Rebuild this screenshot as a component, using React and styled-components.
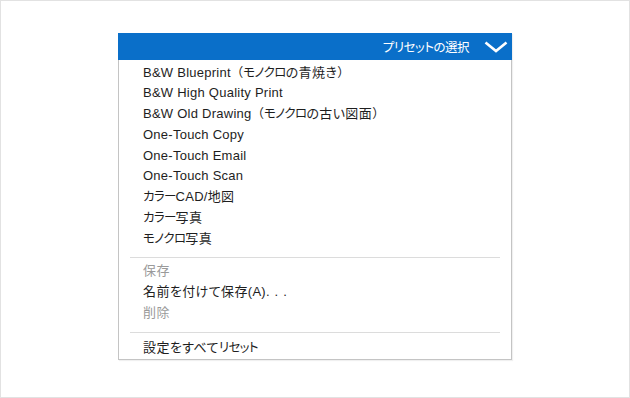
import React from "react";
import styled, { createGlobalStyle } from "styled-components";

const Global = createGlobalStyle`
  html, body { margin: 0; padding: 0; background: #ffffff; }
  body {
    font-family: "Liberation Sans", Arial, "Noto Sans CJK JP", sans-serif;
  }
  * { box-sizing: border-box; }
`;

const Frame = styled.div`
  width: 630px;
  height: 398px;
  border: 1px solid #e2e2e2;
  display: flex;
  justify-content: center;
  align-items: flex-start;
  padding-top: 32px;
  background: #fff;
`;

const Panel = styled.div`
  width: 394px;
  border: 1px solid #c4c4c4;
  border-top: none;
  background: #fff;
  box-shadow: 1px 1px 1px rgba(0, 0, 0, 0.06);
  display: flex;
  flex-direction: column;
`;

const Header = styled.div`
  height: 27px;
  margin: 0 -1px;
  background: #0a6fc9;
  color: #fff;
  display: flex;
  align-items: center;
  justify-content: flex-end;
  gap: 14px;
  padding-right: 4px;
`;

const HeaderLabel = styled.span`
  font-family: "Noto Sans CJK JP", sans-serif;
  font-size: 12.5px;
  font-feature-settings: "palt";
  letter-spacing: -0.5px;
  margin-right: 1px;
`;

const List = styled.div`
  display: flex;
  flex-direction: column;
  padding: 1.5px 0 1.5px;
`;

const Item = styled.div`
  height: 20.75px;
  line-height: 20.75px;
  padding-left: 24px;
  color: ${(p) => (p.$disabled ? "#9a9a9a" : "#1e1e1e")};
  white-space: nowrap;
`;

const Latin = styled.span`
  font-family: "Liberation Sans", Arial, sans-serif;
  font-size: 13px;
  letter-spacing: 0.25px;
`;

const Kana = styled.span`
  font-family: "Noto Sans CJK JP", sans-serif;
  font-size: 12.5px;
  font-feature-settings: "palt";
  letter-spacing: -0.7px;
`;

const Kanji = styled.span`
  font-family: "Noto Sans CJK JP", sans-serif;
  font-size: 13px;
  font-feature-settings: "palt";
  letter-spacing: 0.4px;
`;

const Paren = styled.span`
  font-family: "Noto Sans CJK JP", sans-serif;
  font-size: 12.5px;
`;

const Dots = styled.span`
  font-family: "Liberation Sans", Arial, sans-serif;
  font-size: 13px;
  letter-spacing: 5px;
`;

const Separator = styled.div`
  height: 1px;
  background: #dcdcdc;
  margin: ${(p) => p.$m || "9px 11px 2px"};
`;

const Chevron = () => (
  <svg width="24" height="12" viewBox="0 0 24 12" fill="none">
    <path d="M1.5 1.5 L12 10 L22.5 1.5" stroke="#fff" strokeWidth="2.6" />
  </svg>
);

const KANA = /^[\u30A0-\u30FF]+$/;
const CJK = /^[\u3000-\u303F\u3040-\u309F\u4E00-\u9FFF]+$/;
const RE = /([\u30A0-\u30FF]+|[\u3000-\u303F\u3040-\u309F\u4E00-\u9FFF]+|[（）]|\.\.\.)/;

function Text({ children }) {
  return children
    .split(RE)
    .filter(Boolean)
    .map((seg, i) => {
      if (seg === "...") return <Dots key={i}>{seg}</Dots>;
      if (seg === "（" || seg === "）") return <Paren key={i}>{seg}</Paren>;
      if (KANA.test(seg)) return <Kana key={i}>{seg}</Kana>;
      if (CJK.test(seg)) return <Kanji key={i}>{seg}</Kanji>;
      return <Latin key={i}>{seg}</Latin>;
    });
}

const presets = [
  "B&W Blueprint（モノクロの青焼き）",
  "B&W High Quality Print",
  "B&W Old Drawing（モノクロの古い図面）",
  "One-Touch Copy",
  "One-Touch Email",
  "One-Touch Scan",
  "カラーCAD/地図",
  "カラー写真",
  "モノクロ写真",
];

export default function App() {
  return (
    <>
      <Global />
      <Frame>
        <Panel>
          <Header>
            <HeaderLabel>プリセットの選択</HeaderLabel>
            <Chevron />
          </Header>
          <List>
            {presets.map((p) => (
              <Item key={p}>
                <Text>{p}</Text>
              </Item>
            ))}
            <Separator />
            <Item $disabled>
              <Text>保存</Text>
            </Item>
            <Item>
              <Text>名前を付けて保存(A)...</Text>
            </Item>
            <Item $disabled>
              <Text>削除</Text>
            </Item>
            <Separator $m="9.5px 11px 3.5px" />
            <Item>
              <Text>設定をすべてリセット</Text>
            </Item>
          </List>
        </Panel>
      </Frame>
    </>
  );
}
